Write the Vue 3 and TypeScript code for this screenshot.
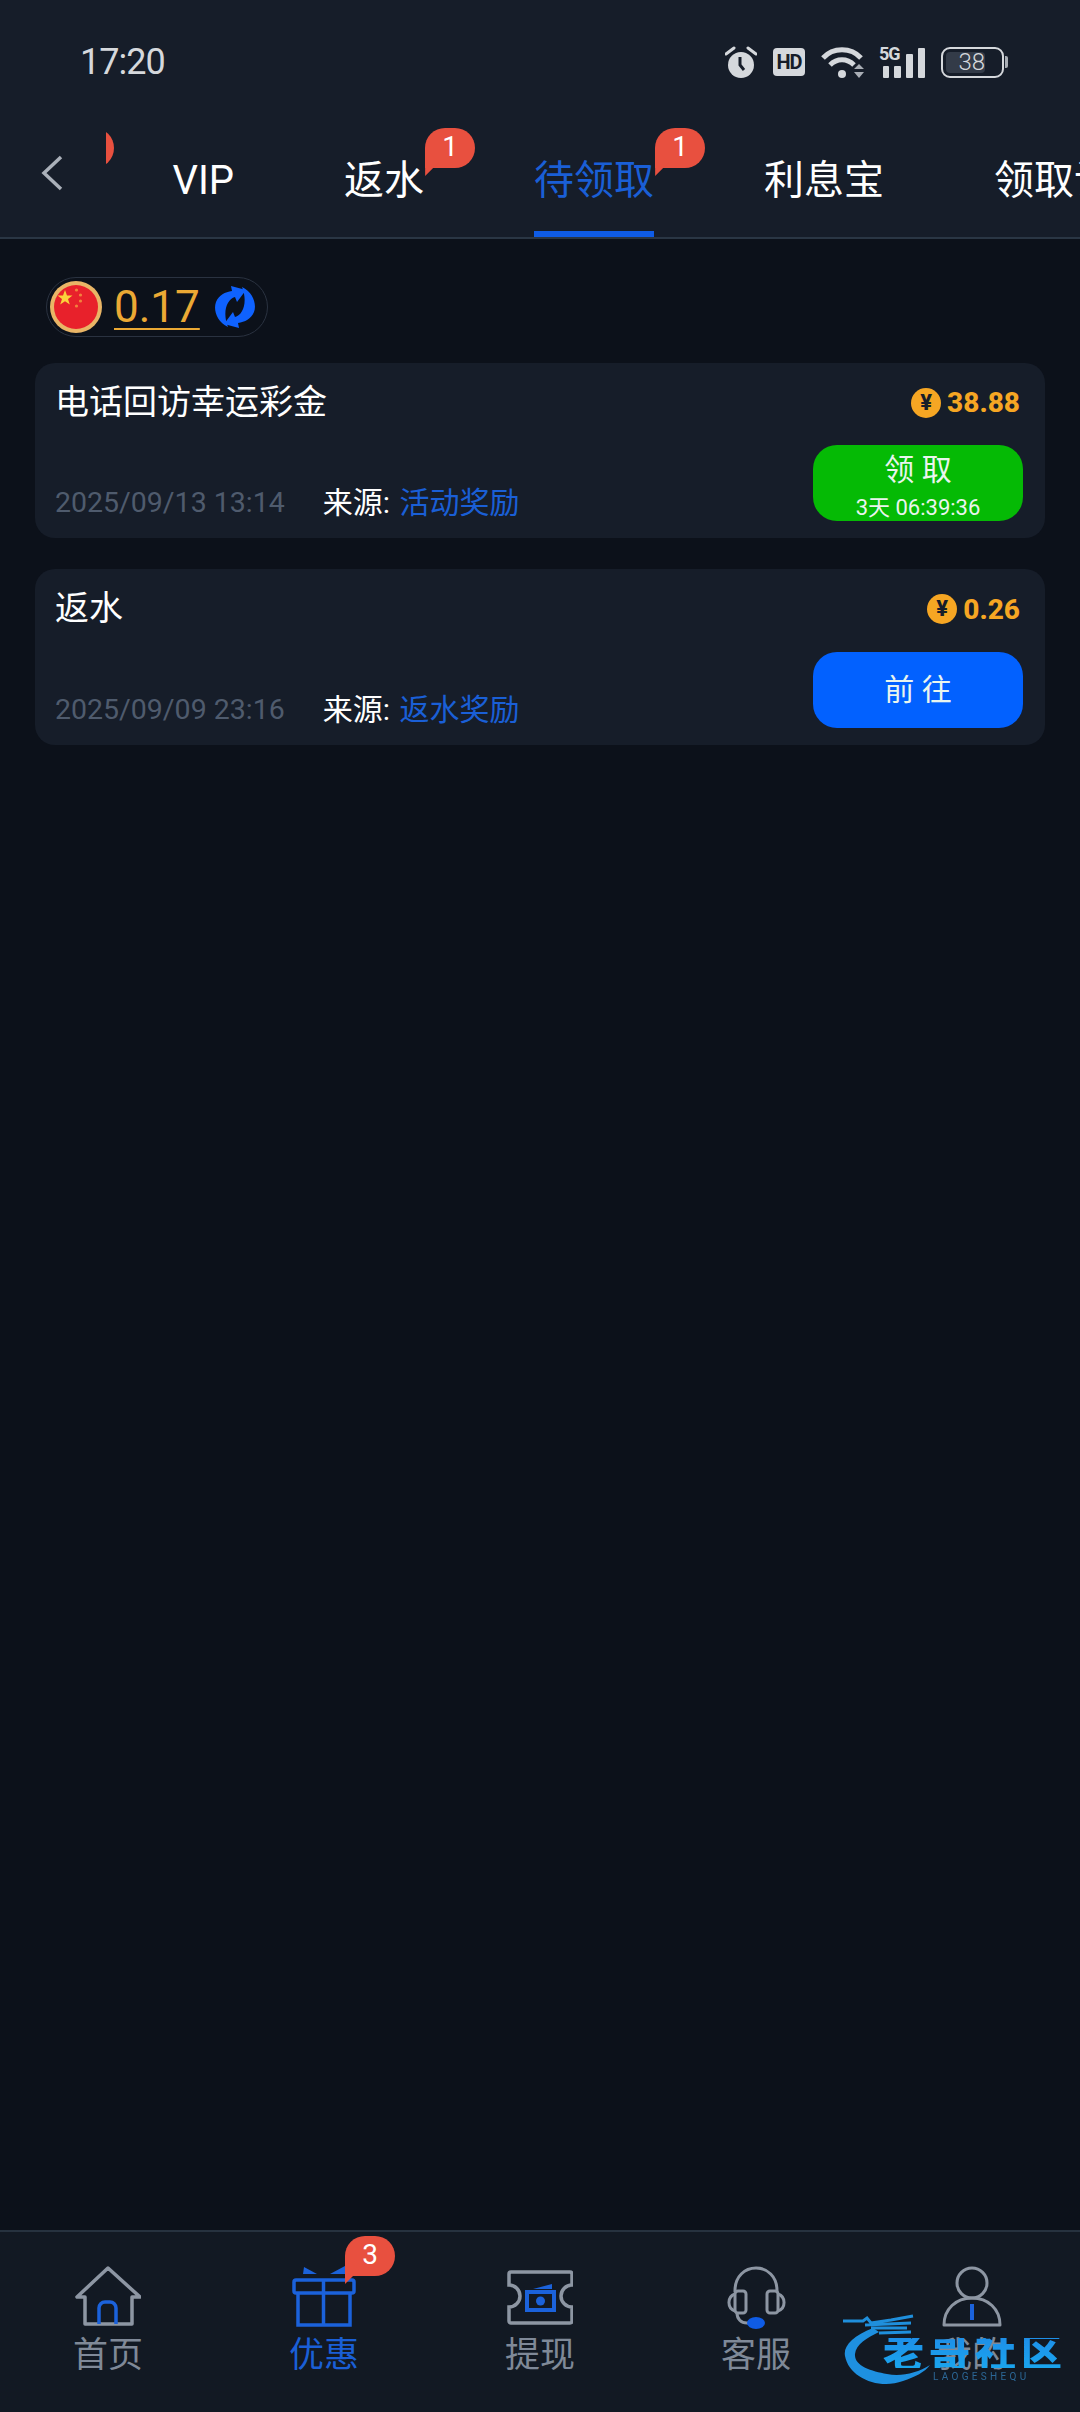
<template>
  <div class="page">
    <header class="header">
      <div class="status-bar">
        <span class="time">17:20</span>
        <div class="status-icons">
          <svg class="alarm" width="32" height="34" viewBox="0 0 32 34">
            <circle cx="16" cy="20" r="13" fill="#d5d8dc" />
            <path d="M1 9 9 3M31 9 23 3" stroke="#d5d8dc" stroke-width="3" stroke-linecap="round" />
            <path d="M15 12v8l4 5" fill="none" stroke="#161d29" stroke-width="3" />
          </svg>
          <span class="hd">HD</span>
          <svg width="44" height="34" viewBox="0 0 44 34">
            <path d="M2 13C12 2 30 2 40 13" fill="none" stroke="#d5d8dc" stroke-width="5" />
            <path d="M9 20c7-7 17-7 24 0" fill="none" stroke="#d5d8dc" stroke-width="5" />
            <circle cx="21" cy="29" r="4" fill="#d5d8dc" />
            <path d="M33 24l5-5 5 5zM33 27l5 6 5-6z" fill="#a9aeb5" />
          </svg>
          <div class="signal">
            <span class="signal-text">5G</span>
            <svg width="47" height="33" viewBox="0 0 47 33">
              <rect x="5" y="20" width="6" height="12" rx="1" fill="#d5d8dc" />
              <rect x="16" y="20" width="7" height="12" rx="1" fill="#d5d8dc" />
              <rect x="28" y="8" width="7" height="24" rx="1" fill="#d5d8dc" />
              <rect x="40" y="2" width="7" height="30" rx="1" fill="#d5d8dc" />
            </svg>
          </div>
          <div class="battery">
            <div class="battery-box">
              <div class="battery-fill">38</div>
            </div>
            <span class="battery-nub"></span>
          </div>
        </div>
      </div>

      <div class="tab-row">
        <button class="back-btn" title="返回">
          <svg width="24" height="36" viewBox="0 0 24 36">
            <path d="M21 2 4 18l17 16" fill="none" stroke="#aab0b9" stroke-width="3.5" />
          </svg>
        </button>
        <div class="tab-scroll">
          <div class="tab-track">
            <div v-for="tab in tabs" :key="tab.name" class="tab" :class="{ active: tab.name === activeTab }">
              <span class="tab-label">
                {{ tab.name }}
                <span v-if="tab.badge" class="badge tab-badge">{{ tab.badge }}</span>
              </span>
            </div>
          </div>
        </div>
      </div>
    </header>

    <main class="content">
      <div class="balance">
        <svg width="52" height="52" viewBox="0 0 52 52">
          <circle cx="26" cy="26" r="26" fill="#e9b566" />
          <circle cx="26" cy="26" r="22" fill="#e8212b" />
          <polygon
            points="15,9 17,14.5 22.5,14.5 18,18 19.8,23.5 15,20.2 10.2,23.5 12,18 7.5,14.5 13,14.5"
            fill="#fbd13b"
          />
          <circle cx="26.5" cy="9" r="1.6" fill="#f2823d" />
          <circle cx="30.5" cy="14" r="1.6" fill="#f2823d" />
          <circle cx="30.5" cy="20" r="1.6" fill="#f2823d" />
          <circle cx="26.5" cy="25" r="1.6" fill="#f2823d" />
        </svg>
        <span class="balance-value">0.17</span>
        <svg width="42" height="42" viewBox="0 0 42 42">
          <g fill="#0f62fe">
            <path d="M17 0 32 4 23 16 21 11C13 13 8 26 14 41 3 36-1 24 2 16 5 9 11 6 18 5Z" />
            <path transform="rotate(180 21 21)" d="M17 0 32 4 23 16 21 11C13 13 8 26 14 41 3 36-1 24 2 16 5 9 11 6 18 5Z" />
          </g>
        </svg>
      </div>

      <div class="card-list">
        <div v-for="item in rewards" :key="item.title" class="card">
          <div class="card-top">
            <span class="card-title">{{ item.title }}</span>
            <span class="amount">
              <span class="coin">¥</span>
              {{ item.amount }}
            </span>
          </div>
          <div class="card-bottom">
            <div class="meta">
              <span class="date">{{ item.date }}</span>
              <span class="source">来源: <span class="source-link">{{ item.source }}</span></span>
            </div>
            <button class="action" :class="item.countdown ? 'action-green' : 'action-blue'">
              <span class="action-text">{{ item.action }}</span>
              <span v-if="item.countdown" class="countdown">{{ item.countdown }}</span>
            </button>
          </div>
        </div>
      </div>
    </main>

    <nav class="bottom-nav">
      <div class="nav-item">
        <div class="nav-icon">
          <svg width="66" height="62" viewBox="0 0 66 62" fill="none">
            <path d="M33 2 2 31h8v27h47V31h8Z" stroke="#8d96a3" stroke-width="3.5" stroke-linejoin="round" />
            <path d="M24 58V42a6 6 0 0 1 6-6h5a6 6 0 0 1 6 6v16" stroke="#1b62db" stroke-width="3.5" />
          </svg>
        </div>
        <span class="nav-label">首页</span>
      </div>
      <div class="nav-item active">
        <div class="nav-icon">
          <svg width="66" height="62" viewBox="0 0 66 62" fill="none">
            <rect x="3" y="14" width="60" height="13" rx="2" stroke="#1b62db" stroke-width="3.5" />
            <path d="M7 27v32h52V27M32.500 14v45" stroke="#1b62db" stroke-width="3.5" />
            <path d="M13 1l13 7H12ZM54 0 39 8h15Z" fill="#1b62db" />
          </svg>
          <span class="badge nav-badge">3</span>
        </div>
        <span class="nav-label">优惠</span>
      </div>
      <div class="nav-item">
        <div class="nav-icon">
          <svg width="66" height="62" viewBox="0 0 66 62" fill="none">
            <path
              d="M4 6h59a2 2 0 0 1 2 2v11a11 11 0 0 0 0 22v14a2 2 0 0 1-2 2H4a2 2 0 0 1-2-2V41a11 11 0 0 0 0-22V8a2 2 0 0 1 2-2Z"
              stroke="#8d96a3"
              stroke-width="3.5"
            />
            <rect x="20" y="26" width="27" height="18" stroke="#1b62db" stroke-width="4" />
            <circle cx="33.500" cy="35" r="4.500" fill="#1b62db" />
            <path d="M26 23 45 18v5Z" fill="#1b62db" />
          </svg>
        </div>
        <span class="nav-label">提现</span>
      </div>
      <div class="nav-item">
        <div class="nav-icon">
          <svg width="66" height="64" viewBox="0 0 66 64" fill="none" stroke="#8d96a3" stroke-width="3">
            <path d="M12 26C11-6 55-6 54 26" />
            <rect x="12" y="25" width="11" height="22" rx="3" />
            <rect x="44" y="25" width="11" height="22" rx="3" />
            <path d="M12 28a9 9 0 0 0 0 17M55 28a9 9 0 0 1 0 17" />
            <path d="M14 47c0 6 4 10 10 10h3" />
            <ellipse cx="33" cy="57" rx="9" ry="6" fill="#0f5ce6" stroke="none" />
          </svg>
        </div>
        <span class="nav-label">客服</span>
      </div>
      <div class="nav-item">
        <div class="nav-icon">
          <svg width="66" height="62" viewBox="0 0 66 62" fill="none">
            <circle cx="33" cy="17" r="15" stroke="#8d96a3" stroke-width="3" />
            <path d="M5 59C5 43 17 32 33 32s28 11 28 27Z" stroke="#8d96a3" stroke-width="3" stroke-linejoin="round" />
            <path d="M33 38v16" stroke="#1b62db" stroke-width="4" />
          </svg>
        </div>
        <span class="nav-label">我的</span>
      </div>
    </nav>

    <!-- 水印 -->
    <div class="watermark">
      <svg class="watermark-dragon" width="100" height="80" viewBox="0 0 100 80">
        <path d="M30 16C10 24 0 34 2 44 6 66 36 78 60 69 72 65 82 60 87 53 74 61 58 65 44 62 28 59 11 54 12 42 13 32 24 26 36 20Z" fill="#1e90e0" />
        <path d="M0 9H20L24 6 28 11 48 8 70 4M22 13 68 11M28 16 64 16M36 21 68 20" fill="none" stroke="#1f8fdc" stroke-width="3" />
      </svg>
      <div class="watermark-text">老哥社区</div>
      <div class="watermark-sub">LAOGESHEQU</div>
    </div>
  </div>
</template>

<script setup lang="ts">
interface Tab {
  name: string
  badge?: number
}

interface Reward {
  title: string
  amount: string
  date: string
  source: string
  action: string
  countdown?: string
}

const activeTab = '待领取'

const tabs: Tab[] = [
  { name: '活动', badge: 1 },
  { name: 'VIP' },
  { name: '返水', badge: 1 },
  { name: '待领取', badge: 1 },
  { name: '利息宝' },
  { name: '领取记录' }
]

const rewards: Reward[] = [
  {
    title: '电话回访幸运彩金',
    amount: '38.88',
    date: '2025/09/13 13:14',
    source: '活动奖励',
    action: '领 取',
    countdown: '3天 06:39:36'
  },
  {
    title: '返水',
    amount: '0.26',
    date: '2025/09/09 23:16',
    source: '返水奖励',
    action: '前 往'
  }
]
</script>

<style>
body {
  background: #0c111a;
}
</style>

<style scoped>
.page {
  position: relative;
  display: flex;
  flex-direction: column;
  width: 1080px;
  height: 2412px;
  overflow: hidden;
  background: #0c111a;
  color: #fff;
  font-family: Roboto, "Noto Sans CJK SC", sans-serif;
}
.header {
  background: #161d29;
}
.status-bar {
  display: flex;
  align-items: center;
  justify-content: space-between;
  height: 124px;
  padding: 0 72px 0 80px;
}
.time {
  font-size: 36px;
  letter-spacing: -1px;
  color: #d5d8dc;
}
.status-icons {
  display: flex;
  align-items: center;
}
.alarm {
  margin-right: 16px;
}
.hd {
  width: 32px;
  height: 28px;
  margin-right: 16px;
  border-radius: 4px;
  background: #d5d8dc;
  color: #161d29;
  font-size: 20px;
  font-weight: 700;
  letter-spacing: -1px;
  line-height: 28px;
  text-align: center;
}
.signal {
  position: relative;
  width: 47px;
  margin: 0 16px 0 13px;
  height: 33px;
}
.signal-text {
  position: absolute;
  top: -3px;
  left: 1px;
  font-size: 18px;
  font-weight: 700;
  letter-spacing: -1px;
  color: #d5d8dc;
}
.battery {
  display: flex;
  align-items: center;
  gap: 1px;
}
.battery-box {
  width: 63px;
  height: 31px;
  box-sizing: border-box;
  padding: 3px;
  border: 2.5px solid #d5d8dc;
  border-radius: 9px;
}
.battery-fill {
  width: 39px;
  height: 100%;
  border-radius: 4px;
  background: #333b48;
  color: #d5d8dc;
  font-size: 24px;
  font-weight: 300;
  line-height: 20px;
  text-align: right;
}
.battery-nub {
  width: 3px;
  height: 12px;
  border-radius: 0 2px 2px 0;
  background: #a9aeb5;
}
.tab-row {
  display: flex;
  height: 115px;
  box-sizing: border-box;
  border-bottom: 2px solid #2a3644;
}
.back-btn {
  flex: none;
  display: flex;
  align-items: center;
  width: 106px;
  padding: 0 0 16px 40px;
  border: none;
  background: none;
}
.tab-scroll {
  flex: 1;
  min-width: 0;
  overflow: hidden;
}
.tab-track {
  display: flex;
  margin-left: -178.500px;
  height: 100%;
}
.tab {
  flex: none;
  display: flex;
  align-items: center;
  padding: 0 55px;
  font-size: 40px;
  line-height: 40px;
  white-space: nowrap;
}
.tab-label {
  position: relative;
  display: block;
}
.tab.active {
  color: #1a5fd6;
}
.tab.active .tab-label::after {
  content: "";
  position: absolute;
  left: 0;
  right: 0;
  bottom: -36.500px;
  height: 6px;
  background: #0f5ce6;
}
.badge {
  position: absolute;
  width: 50px;
  height: 40px;
  border-radius: 20px 20px 20px 0;
  background: #e8503f;
  color: #fff;
  font-size: 28px;
  line-height: 38px;
  text-align: center;
}
.badge::after {
  content: "";
  position: absolute;
  left: 0;
  top: 20px;
  width: 14px;
  height: 28px;
  background: #e8503f;
  clip-path: polygon(0 0, 100% 50%, 0 100%);
}
.tab-badge {
  top: -32.500px;
  left: calc(100% + 1px);
}
.content {
  flex: 1;
  padding: 38px 35px 0;
}
.balance {
  display: inline-flex;
  align-items: center;
  box-sizing: border-box;
  height: 60px;
  margin-left: 11px;
  padding: 0 11px 0 3px;
  border: 1.5px solid #2a3240;
  border-radius: 30px;
  vertical-align: top;
}
.balance-value {
  margin: 0 14px 0 12px;
  color: #eba934;
  font-size: 44px;
  line-height: 52px;
  text-decoration: underline;
  text-decoration-thickness: 2px;
  text-underline-offset: 6px;
}
.card-list {
  display: flex;
  flex-direction: column;
  gap: 31px;
  margin-top: 25.500px;
}
.card {
  display: flex;
  flex-direction: column;
  justify-content: space-between;
  height: 175.500px;
  box-sizing: border-box;
  padding: 18px 22px 17px 20px;
  border-radius: 20px;
  background: #161d29;
}
.card-top {
  display: flex;
  align-items: center;
  justify-content: space-between;
  height: 44px;
}
.card-title {
  margin-bottom: 2px;
  font-size: 34px;
  line-height: 40px;
}
.amount {
  display: flex;
  align-items: center;
  gap: 6px;
  padding-right: 3px;
  color: #f6a623;
  font-size: 28px;
  font-weight: 800;
}
.coin {
  width: 30px;
  height: 30px;
  border-radius: 50%;
  background: #f6a623;
  color: #161d29;
  font-size: 22px;
  line-height: 30px;
  text-align: center;
}
.card-bottom {
  display: flex;
  align-items: flex-end;
  justify-content: space-between;
}
.meta {
  display: flex;
  gap: 38px;
  line-height: 36px;
}
.date {
  color: #4f5b6d;
  font-size: 28.500px;
}
.source {
  font-size: 30px;
}
.source-link {
  margin-left: 2px;
  color: #1a5fd6;
}
.action {
  display: flex;
  flex-direction: column;
  align-items: center;
  justify-content: center;
  width: 210px;
  height: 76px;
  padding: 0;
  border: none;
  border-radius: 24px;
  color: #e9f5ee;
  font-family: inherit;
}
.action-green {
  justify-content: flex-start;
  padding-top: 7px;
  background: #05ba05;
}
.action-blue {
  background: #0261ff;
}
.action-text {
  font-size: 30px;
  line-height: 36px;
}
.countdown {
  margin-top: 8px;
  font-size: 22px;
  line-height: 24px;
}
.bottom-nav {
  display: flex;
  flex: none;
  height: 182px;
  box-sizing: border-box;
  padding-top: 34px;
  border-top: 2px solid #26323f;
  background: #121923;
}
.nav-item {
  flex: 1;
  display: flex;
  flex-direction: column;
  align-items: center;
  color: #7f8998;
}
.nav-item.active {
  color: #1a5fd6;
}
.nav-icon {
  position: relative;
  width: 66px;
  height: 62px;
  margin-bottom: 8px;
}
.nav-badge {
  top: -30px;
  left: 54px;
}
.nav-label {
  font-size: 35px;
  line-height: 40px;
}
.watermark {
  position: absolute;
  left: 843px;
  top: 2312px;
  width: 237px;
  height: 80px;
  padding: 26px 0 0 40px;
  box-sizing: border-box;
  filter: blur(0.7px);
}
.watermark-dragon {
  position: absolute;
  left: 0;
  top: 0;
}
.watermark-text {
  position: relative;
  width: 180px;
  background: linear-gradient(#1e8fe8, #1aa5ee);
  -webkit-background-clip: text;
  background-clip: text;
  color: transparent;
  font-size: 41px;
  font-weight: 900;
  letter-spacing: 5px;
  line-height: 30px;
  white-space: nowrap;
}
.watermark-sub {
  position: relative;
  margin: 5px 0 0 50px;
  color: #2b6796;
  font-size: 10px;
  letter-spacing: 3.300px;
  line-height: 8px;
  white-space: nowrap;
}
</style>
